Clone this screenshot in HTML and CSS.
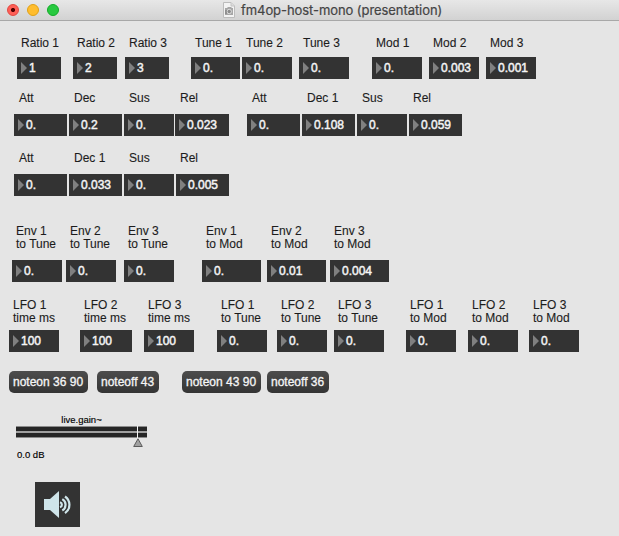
FILE: index.html
```html
<!DOCTYPE html>
<html lang="en">
<head>
<meta charset="utf-8">
<title>fm4op-host-mono</title>
<link rel="stylesheet" href="styles.css">
</head>
<body>
<header class="titlebar">
  <div class="lights"><i class="light close"></i><i class="light minimize"></i><i class="light expand"></i></div>
  <svg class="doc-icon" viewBox="0 0 12 16" width="12" height="16">
    <path d="M.5 .5H8L11.5 4V15.5H.5Z" fill="#f3f3f3" stroke="#bcbcbc"/>
    <path d="M8 .5V4h3.5" fill="#ddd" stroke="#c4c4c4"/>
    <path d="M2 6h2l1-1h3l1 1h1v7H2Z" fill="#a6a6a6"/>
    <circle cx="6.2" cy="9.5" r="2.2" fill="#8b8b8b" stroke="#eee" stroke-width=".8"/>
    <path d="M3 8v4" stroke="#777"/>
  </svg>
  <h1>fm4op-host-mono (presentation)</h1>
</header>
<main class="patcher">
  <section class="row ratios">
    <div class="cell w44"><label>Ratio 1</label><output>1</output></div>
    <div class="cell w44"><label>Ratio 2</label><output>2</output></div>
    <div class="cell w44"><label>Ratio 3</label><output>3</output></div>
    <div class="cell w49"><label>Tune 1</label><output>0.</output></div>
    <div class="cell w50"><label>Tune 2</label><output>0.</output></div>
    <div class="cell w50"><label>Tune 3</label><output>0.</output></div>
    <div class="cell w50"><label>Mod 1</label><output>0.</output></div>
    <div class="cell w50"><label>Mod 2</label><output>0.003</output></div>
    <div class="cell w50"><label>Mod 3</label><output>0.001</output></div>
  </section>
  <section class="row envelopes">
    <div class="cell w53"><label>Att</label><output>0.</output></div>
    <div class="cell w53"><label>Dec</label><output>0.2</output></div>
    <div class="cell w50"><label>Sus</label><output>0.</output></div>
    <div class="cell w54"><label>Rel</label><output>0.023</output></div>
    <div class="cell w53"><label>Att</label><output>0.</output></div>
    <div class="cell w53"><label>Dec 1</label><output>0.108</output></div>
    <div class="cell w50"><label>Sus</label><output>0.</output></div>
    <div class="cell w53 tight"><label>Rel</label><output>0.059</output></div>
  </section>
  <section class="row envelope-three">
    <div class="cell w53"><label>Att</label><output>0.</output></div>
    <div class="cell w53"><label>Dec 1</label><output>0.033</output></div>
    <div class="cell w50"><label>Sus</label><output>0.</output></div>
    <div class="cell w53 tight"><label>Rel</label><output>0.005</output></div>
  </section>
  <section class="row env-depths">
    <div class="cell w50"><label>Env 1<br>to Tune</label><output>0.</output></div>
    <div class="cell w50"><label>Env 2<br>to Tune</label><output>0.</output></div>
    <div class="cell w50"><label>Env 3<br>to Tune</label><output>0.</output></div>
    <div class="cell w59"><label>Env 1<br>to Mod</label><output>0.</output></div>
    <div class="cell w59"><label>Env 2<br>to Mod</label><output>0.01</output></div>
    <div class="cell w59"><label>Env 3<br>to Mod</label><output>0.004</output></div>
  </section>
  <section class="row lfos">
    <div class="cell w50"><label>LFO 1<br>time ms</label><output>100</output></div>
    <div class="cell w52"><label>LFO 2<br>time ms</label><output>100</output></div>
    <div class="cell w50"><label>LFO 3<br>time ms</label><output>100</output></div>
    <div class="cell w50"><label>LFO 1<br>to Tune</label><output>0.</output></div>
    <div class="cell w50"><label>LFO 2<br>to Tune</label><output>0.</output></div>
    <div class="cell w50"><label>LFO 3<br>to Tune</label><output>0.</output></div>
    <div class="cell w50"><label>LFO 1<br>to Mod</label><output>0.</output></div>
    <div class="cell w50"><label>LFO 2<br>to Mod</label><output>0.</output></div>
    <div class="cell w50"><label>LFO 3<br>to Mod</label><output>0.</output></div>
  </section>
  <section class="messages">
    <button class="on">noteon 36 90</button>
    <button class="off">noteoff 43</button>
    <button class="on">noteon 43 90</button>
    <button class="off">noteoff 36</button>
  </section>
  <section class="gain">
    <div class="gain-name">live.gain~</div>
    <svg class="gain-meter" viewBox="0 0 131 22" width="131" height="22">
      <path fill="#8c8c8c" d="M0 0h131v12H0z"/>
      <path fill="#262626" d="M0 1h131v4H0zM0 7h131v4H0z"/>
      <path fill="#b4b4b4" d="M0 5.5h131v1H0z"/>
      <path fill="#f4f4f4" d="M121 0h1v12h-1z"/>
      <path fill="#a0a0a0" stroke="#5c5c5c" d="M122 12.8L126.3 20.5H117.7Z"/>
    </svg>
    <div class="gain-value">0.0 dB</div>
  </section>
  <div class="dac">
    <svg viewBox="0 0 45 45" width="45" height="45">
      <path fill="#cfe5ea" d="M9 17h6l9-8v27l-9-8H9z"/>
      <g fill="none" stroke="#cfe5ea" stroke-width="2.2">
        <path d="M25 20.3a2.6 2.6 0 0 1 0 5"/>
        <path d="M27.3 17.1a6.6 6.6 0 0 1 0 11.4"/>
        <path d="M30 14.5a10 10 0 0 1 0 16.6"/>
      </g>
    </svg>
  </div>
</main>
</body>
</html>
```

FILE: styles.css
```css
* { box-sizing: border-box; }

body {
  margin: 0;
  height: 536px;
  overflow: hidden;
  background: #e5e5e5;
  color: #1c1c1c;
  font: 12px/13px "Liberation Sans", Arial, sans-serif;
}

.titlebar {
  display: flex;
  align-items: center;
  height: 21px;
  padding-left: 7px;
  background: linear-gradient(#e7e7e7, #d2d2d2);
  border-bottom: 1px solid #a8a8a8;
}

.lights { display: flex; gap: 8px; width: 216px; }
.light { width: 12px; height: 12px; border-radius: 50%; border: 1px solid; }
.close {
  background: radial-gradient(circle, #4d0000 0 1.7px, #ff5f57 2.4px);
  border-color: #e2463f;
}
.minimize { background: #ffbd2e; border-color: #e1a116; }
.expand { background: #28c940; border-color: #12ac28; }

.doc-icon { margin-right: 6px; }

h1 {
  margin: 0;
  font: 400 13px/20px Inter, sans-serif;
  letter-spacing: -.07px;
  white-space: nowrap;
  color: #444;
  -webkit-text-stroke: .2px #444;
}

.row { display: grid; padding-top: 15px; }

.ratios { grid-template-columns: 56px 52px 66px 51px 57px 73px 57px 57px 50px; padding-left: 17px; }
.envelopes { grid-template-columns: 55px 55px 51px 72px 55px 55px 52px 53px; padding: 12px 0 0 14px; }
.envelope-three { grid-template-columns: 55px 55px 52px 53px; padding-left: 14px; }
.env-depths { grid-template-columns: 54px 58px 78px 65px 63px 59px; padding: 28px 0 0 12px; }
.lfos { grid-template-columns: 71px 64px 73px 60px 57px 72px 62px 61px 50px; padding: 16px 0 0 9px; }

label {
  display: block;
  height: 21px;
  padding: 1px 0 0 4px;
  white-space: nowrap;
  -webkit-text-stroke: .1px #1c1c1c;
}

.envelopes label, .envelope-three label { height: 23px; padding-left: 5px; }
.envelopes .tight label, .envelope-three .tight label { padding-left: 4px; }
.env-depths label { height: 36px; }
.lfos label { height: 32px; }

output {
  display: flex;
  align-items: center;
  gap: 2px;
  height: 22px;
  padding-left: 4px;
  background: #333;
  color: #f5f5f5;
  -webkit-text-stroke: .45px #f5f5f5;
}

output::before {
  content: "";
  border: solid transparent;
  border-width: 6px 0 6px 6px;
  border-left-color: #808080;
}

.w44 { width: 44px; }
.w49 { width: 49px; }
.w50 { width: 50px; }
.w52 { width: 52px; }
.w53 { width: 53px; }
.w54 { width: 54px; }
.w59 { width: 59px; }

.messages { display: flex; padding: 19px 0 0 9px; }

button {
  height: 22px;
  padding: 0 0 0 4px;
  border: 0;
  border-radius: 5px;
  background: linear-gradient(#4d4d4d, #343434);
  color: #f5f5f5;
  font: inherit;
  text-align: left;
  -webkit-text-stroke: .3px #f5f5f5;
}

.on { width: 79px; margin-right: 9px; }
.off { width: 62px; margin-right: 23px; }
.off + .on { margin-right: 6px; }

.gain { width: 131px; margin: 20px 0 0 16px; font-size: 9.5px; color: #000; -webkit-text-stroke: .15px #000; }
.gain-name { text-align: center; }
.gain-meter { display: block; }
.gain-value { padding-left: 1px; }

.dac { width: 45px; height: 45px; margin: 21px 0 0 35px; background: #333; }
.dac svg { display: block; }
```
